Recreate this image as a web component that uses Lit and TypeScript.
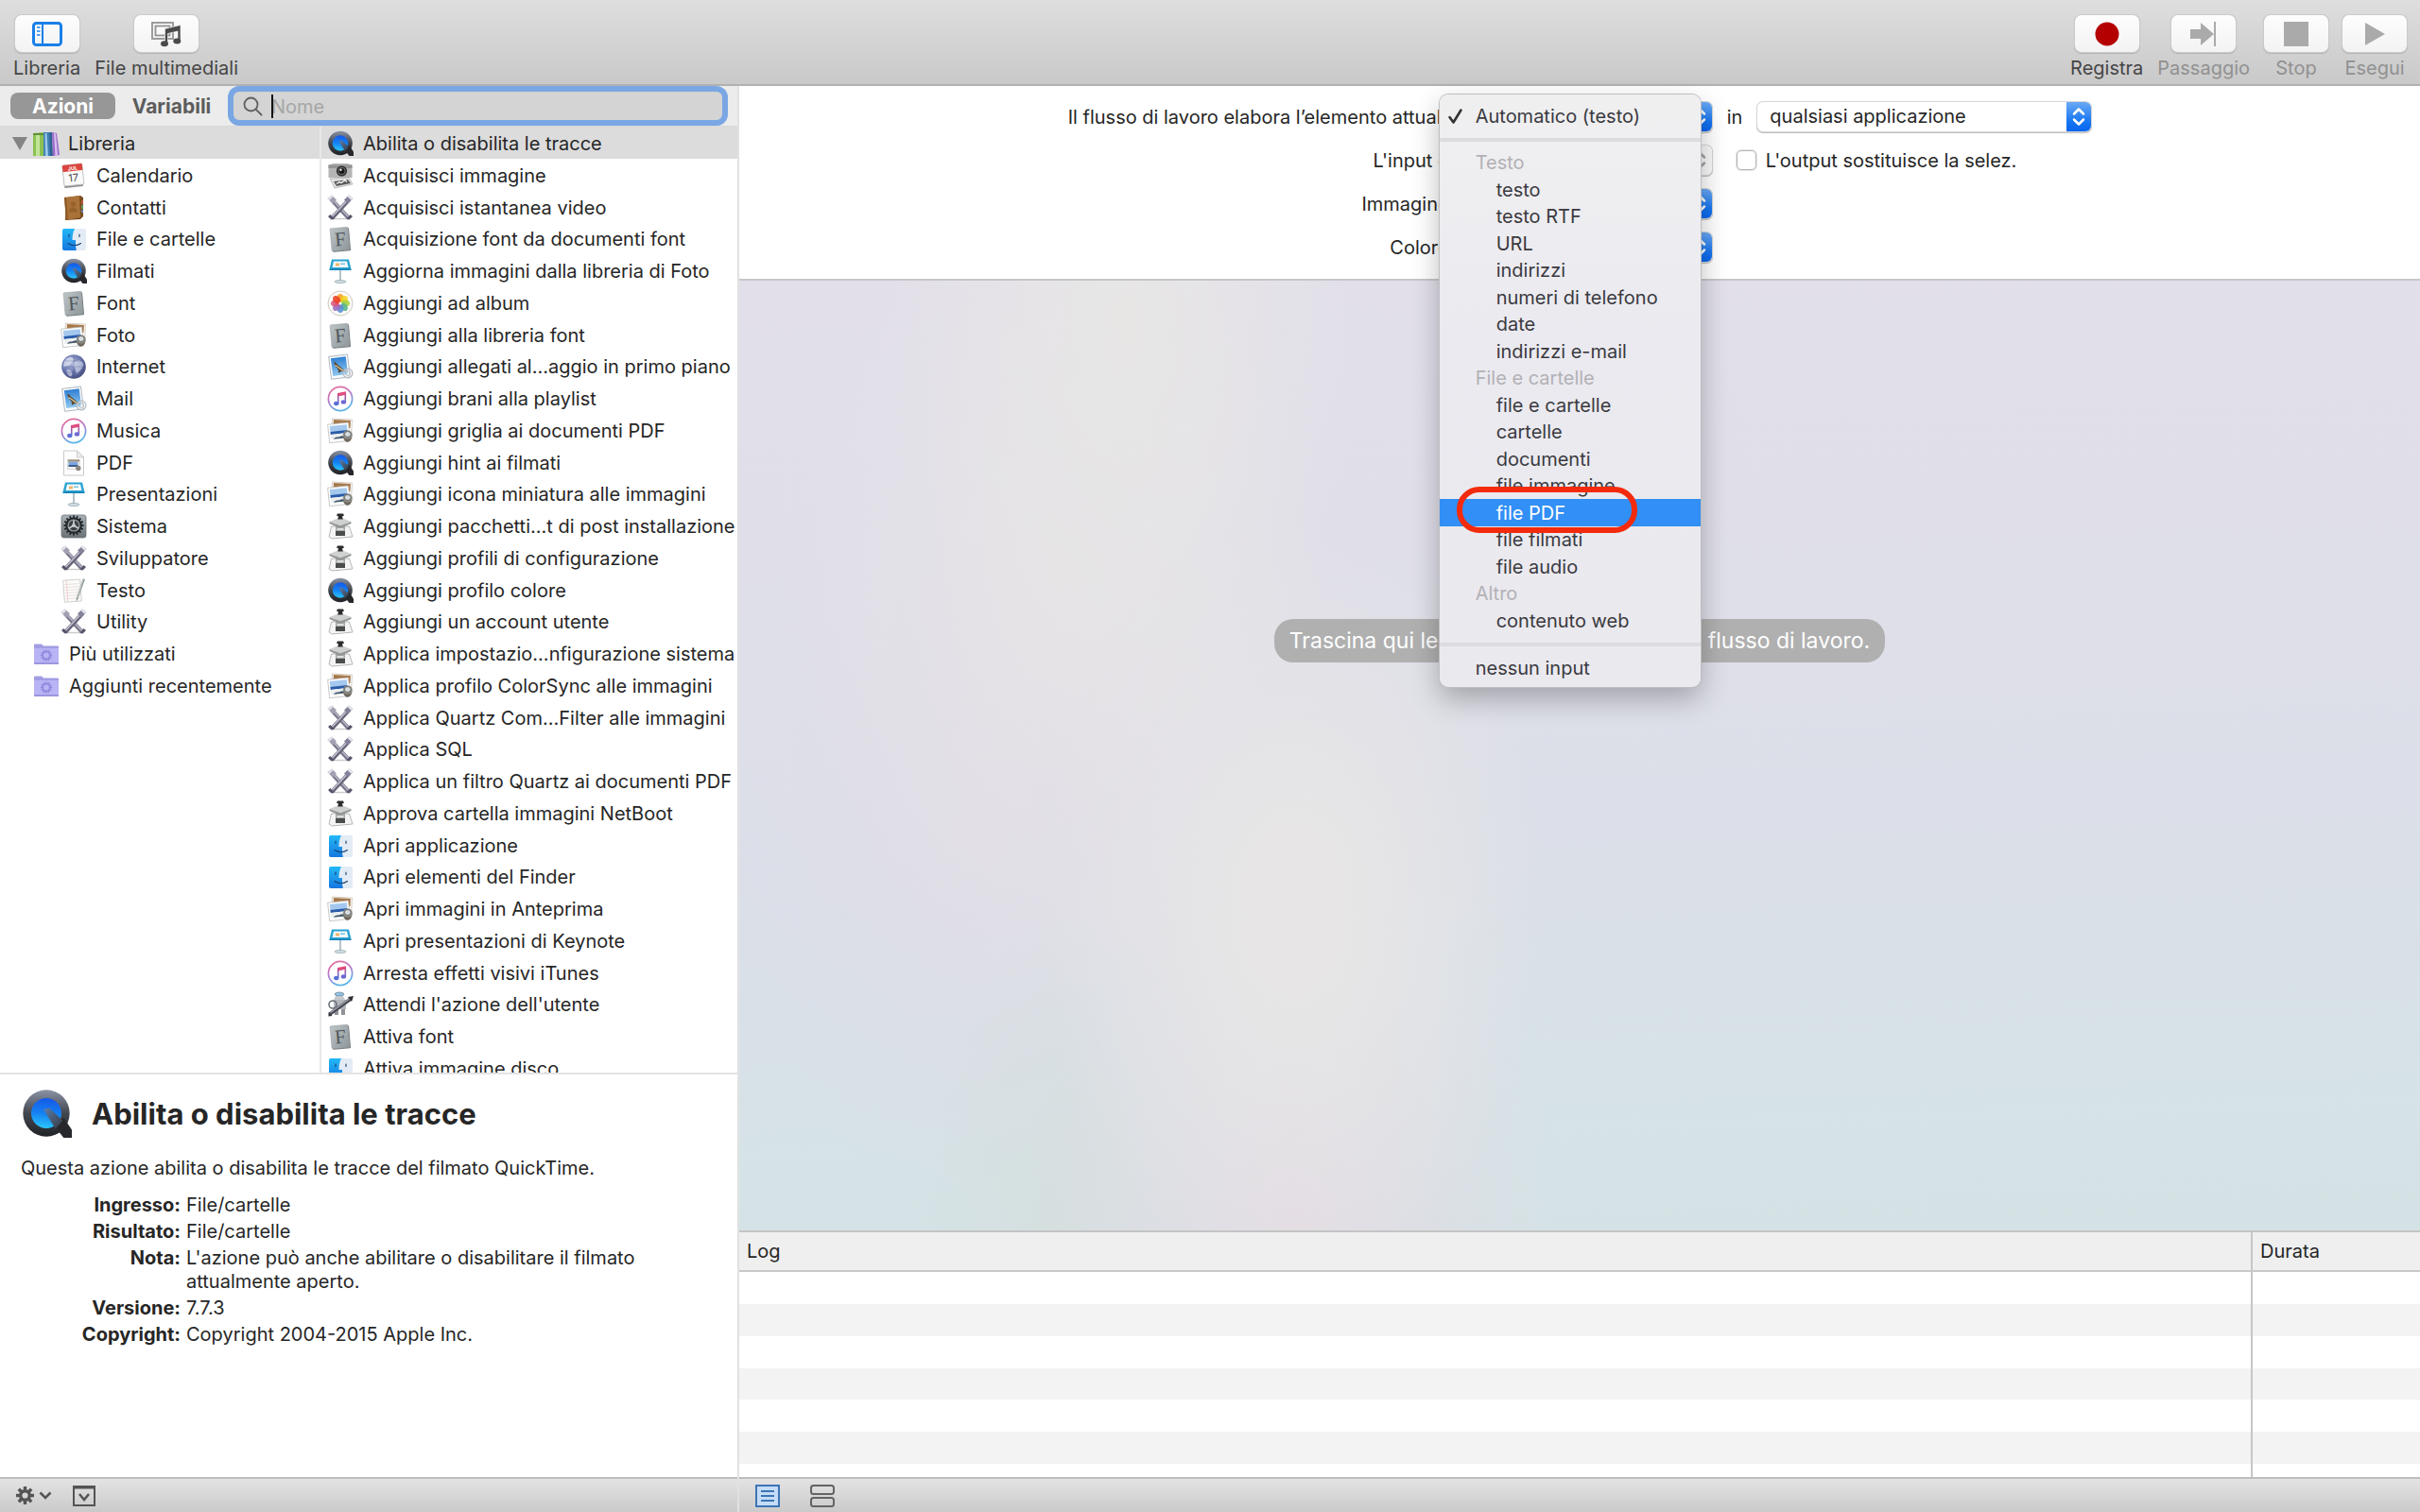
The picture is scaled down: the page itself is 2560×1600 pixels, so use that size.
import { LitElement, html, css, svg, nothing } from "lit";
import { customElement, property, state } from "lit/decorators.js";
import { classMap } from "lit/directives/class-map.js";

type Entry = { icon: string; label: string };
type MenuEntry = { kind: "sub" | "group"; label: string };

const CATEGORIES: Entry[] = [
  { icon: "calendar", label: "Calendario" },
  { icon: "contacts", label: "Contatti" },
  { icon: "finder", label: "File e cartelle" },
  { icon: "quicktime", label: "Filmati" },
  { icon: "font", label: "Font" },
  { icon: "preview", label: "Foto" },
  { icon: "globe", label: "Internet" },
  { icon: "mail", label: "Mail" },
  { icon: "music", label: "Musica" },
  { icon: "pdf", label: "PDF" },
  { icon: "keynote", label: "Presentazioni" },
  { icon: "system", label: "Sistema" },
  { icon: "tools", label: "Sviluppatore" },
  { icon: "text", label: "Testo" },
  { icon: "tools", label: "Utility" },
];

const ACTIONS: Entry[] = [
  { icon: "quicktime", label: "Abilita o disabilita le tracce" },
  { icon: "camera", label: "Acquisisci immagine" },
  { icon: "tools", label: "Acquisisci istantanea video" },
  { icon: "font", label: "Acquisizione font da documenti font" },
  { icon: "keynote", label: "Aggiorna immagini dalla libreria di Foto" },
  { icon: "photos", label: "Aggiungi ad album" },
  { icon: "font", label: "Aggiungi alla libreria font" },
  { icon: "mail", label: "Aggiungi allegati al…aggio in primo piano" },
  { icon: "music", label: "Aggiungi brani alla playlist" },
  { icon: "preview", label: "Aggiungi griglia ai documenti PDF" },
  { icon: "quicktime", label: "Aggiungi hint ai filmati" },
  { icon: "preview", label: "Aggiungi icona miniatura alle immagini" },
  { icon: "installer", label: "Aggiungi pacchetti…t di post installazione" },
  { icon: "installer", label: "Aggiungi profili di configurazione" },
  { icon: "quicktime", label: "Aggiungi profilo colore" },
  { icon: "installer", label: "Aggiungi un account utente" },
  { icon: "installer", label: "Applica impostazio…nfigurazione sistema" },
  { icon: "preview", label: "Applica profilo ColorSync alle immagini" },
  { icon: "tools", label: "Applica Quartz Com…Filter alle immagini" },
  { icon: "tools", label: "Applica SQL" },
  { icon: "tools", label: "Applica un filtro Quartz ai documenti PDF" },
  { icon: "installer", label: "Approva cartella immagini NetBoot" },
  { icon: "finder", label: "Apri applicazione" },
  { icon: "finder", label: "Apri elementi del Finder" },
  { icon: "preview", label: "Apri immagini in Anteprima" },
  { icon: "keynote", label: "Apri presentazioni di Keynote" },
  { icon: "music", label: "Arresta effetti visivi iTunes" },
  { icon: "automator", label: "Attendi l'azione dell'utente" },
  { icon: "font", label: "Attiva font" },
  { icon: "finder", label: "Attiva immagine disco" },
];

const MENU: MenuEntry[] = [
  { kind: "group", label: "Testo" },
  { kind: "sub", label: "testo" },
  { kind: "sub", label: "testo RTF" },
  { kind: "sub", label: "URL" },
  { kind: "sub", label: "indirizzi" },
  { kind: "sub", label: "numeri di telefono" },
  { kind: "sub", label: "date" },
  { kind: "sub", label: "indirizzi e-mail" },
  { kind: "group", label: "File e cartelle" },
  { kind: "sub", label: "file e cartelle" },
  { kind: "sub", label: "cartelle" },
  { kind: "sub", label: "documenti" },
  { kind: "sub", label: "file immagine" },
  { kind: "sub", label: "file PDF" },
  { kind: "sub", label: "file filmati" },
  { kind: "sub", label: "file audio" },
  { kind: "group", label: "Altro" },
  { kind: "sub", label: "contenuto web" },
];

const DETAILS: [string, string][] = [
  ["Ingresso:", "File/cartelle"],
  ["Risultato:", "File/cartelle"],
  ["Nota:", "L'azione può anche abilitare o disabilitare il filmato attualmente aperto."],
  ["Versione:", "7.7.3"],
  ["Copyright:", "Copyright 2004-2015 Apple Inc."],
];

const gearTeeth = (n: number, cx: number, cy: number, r: number, w: number, h: number) =>
  Array.from({ length: n }, (_, i) => svg`
    <rect x=${cx - w / 2} y=${cy - r} width=${w} height=${h}
      transform="rotate(${(360 / n) * i} ${cx} ${cy})" />`);

const PETALS = ["#f7a11b", "#f4d321", "#a8cf3a", "#54b78a", "#5c8fd6", "#9a6cc0", "#d9587e", "#ec3f24"];

const ART: Record<string, unknown> = {
  library: svg`
    <path d="M0 3l11-1v25H0z" fill="#8cc152"/><path d="M3 4l4-.5V27H3z" fill="#c3e59a"/>
    <path d="M0 3h11v2H0z" fill="#5f8f38"/>
    <path d="M11 2h6l2 25h-8z" fill="#3f7fb5"/><path d="M12.500 3h2l1.500 24h-3z" fill="#9cc9e8"/>
    <path d="M17 2h3l1 25h-3z" fill="#2f6292"/>
    <path d="M20 2l5 1 3 23-7 1z" fill="#9b6cc9"/><path d="M22 3l2 .5 2 23-2.500.5z" fill="#d9bff0"/>`,
  calendar: svg`
    <g transform="rotate(-6 14 14)">
      <rect x="3" y="3" width="20" height="23" rx="1" fill="#8f8f8f"/>
      <rect x="3" y="2" width="21" height="22" rx="1" fill="#fafafa" stroke="#b8b8b8" stroke-width=".8"/>
      <rect x="3" y="2" width="21" height="7" rx="1" fill="#d9453d"/>
      <text x="13.500" y="8" font-size="5.500" font-weight="700" fill="#fff" text-anchor="middle" font-family="Inter, sans-serif">JUL</text>
      <text x="13.500" y="20" font-size="11" fill="#444" text-anchor="middle" font-family="Inter, sans-serif">17</text>
    </g>`,
  contacts: svg`
    <path d="M6 3l15-2 3 2v20l-3 3L5 27z" fill="#7b4c20"/>
    <path d="M4 3l16-2 1 23-15 3z" fill="#aa7238"/><path d="M4 3l2-.2L8 26.500l-2 .5z" fill="#8b5826"/>
    <circle cx="13.500" cy="10" r="2.600" fill="#96622c"/>
    <path d="M9 18.500c0-7 8.500-7 9 0z" fill="#96622c"/>
    <path d="M23 6v4" stroke="#c9604a" stroke-width="1.600"/><path d="M23 11v4" stroke="#5fae78" stroke-width="1.600"/><path d="M23 16v3" stroke="#5a94c8" stroke-width="1.600"/>`,
  finder: svg`
    <rect x="2" y="3" width="25" height="23" rx="2" fill="#e3ebf5"/>
    <path d="M4 3h11c-2 4-2.500 8-2.500 12H16c0 4 0 7 .8 11H4a2 2 0 0 1-2-2V5a2 2 0 0 1 2-2z" fill="url(#g-finder)"/>
    <path d="M9 9v2.500M20 9v2.500" stroke="#16406e" stroke-width="1.100" stroke-linecap="round"/>
    <path d="M8 18.500c4 3 9.500 3 13.500 0" stroke="#16406e" stroke-width="1.100" fill="none" stroke-linecap="round"/>`,
  quicktime: svg`
    <circle cx="14" cy="13.500" r="12.800" fill="url(#g-qt-ring)"/>
    <path d="M18 20l5.500-4L28 22.500V27h-4.500z" fill="#26282c"/>
    <circle cx="14" cy="13.500" r="8.300" fill="url(#g-qt)"/>
    <path d="M12.500 11.500l3-1 7.500 7-4 4.500z" fill="url(#g-qt-tail)"/>`,
  font: svg`
    <g transform="rotate(-5 14 14)">
      <rect x="5" y="3" width="19" height="24" rx="1" fill="#6f7679"/>
      <rect x="4" y="2" width="19" height="24" rx="1" fill="url(#g-font)" stroke="#9aa1a4" stroke-width=".5"/>
      <text x="14" y="21" font-size="21" fill="#50575b" text-anchor="middle" font-family="Liberation Serif, serif">F</text>
    </g>`,
  preview: svg`
    <g transform="rotate(3 14 10)"><rect x="5" y="1.500" width="21" height="15" fill="#fff" stroke="#b9aa97" stroke-width=".6"/><rect x="6.500" y="2.500" width="18" height="8" fill="#a67848"/></g>
    <g transform="rotate(-6 13 15)">
      <rect x="1.500" y="6" width="22" height="19.500" fill="#fdfdfd" stroke="#b5b5b5" stroke-width=".7"/>
      <rect x="3.500" y="8" width="18" height="7" fill="#a5c8ee"/><rect x="3.500" y="14" width="18" height="3" fill="#2a5ca8"/>
      <path d="M3.500 17h18v5h-18z" fill="#eceff0"/><path d="M6 22c3-3 5-1 7-2s4-1 5 2z" fill="#44596b"/>
    </g>
    <path d="M17 19c0 9 9 9 9.500 0z" fill="#6f685e"/><ellipse cx="21.800" cy="18" rx="5" ry="4.600" fill="#8f8f8a"/>
    <ellipse cx="21.800" cy="17.500" rx="3.400" ry="3" fill="#d7dde0" stroke="#5d5d59" stroke-width=".9"/>`,
  globe: svg`
    <circle cx="14" cy="14" r="12.800" fill="url(#g-globe)"/>
    <path d="M6 6c4-3 7-2 8 0s-3 4-4 6-5 1-7 3c0-4 1-7 3-9z" fill="#dfe4f3" opacity=".75"/>
    <path d="M16 8c4-2 7 0 8 3s-2 5-4 8-4 3-4-1-3-3-3-6 1-3 3-4z" fill="#dfe4f3" opacity=".6"/>
    <path d="M8 17c3 0 5 3 4 6s-4 0-5-2-1-4 1-4z" fill="#dfe4f3" opacity=".6"/>
    <path d="M14 2v24M2 14h24M5 8h18M5 20h18" stroke="#3d4880" stroke-width=".6" opacity=".5"/>`,
  mail: svg`
    <g transform="rotate(-7 14 14)">
      <rect x="3" y="2" width="20" height="24" fill="#fbfbfb" stroke="#a9b4bd" stroke-width=".9"/>
      <rect x="5" y="4" width="16" height="19" fill="url(#g-mail)"/>
      <path d="M8 8c2 0 3 4 6 6l5 6-5-1c-1 1.500-2.500 1.500-3 .5 1-2 0-3.500-1.500-5.500s-1.500-4-1.500-6z" fill="#5a4a35"/>
      <path d="M8.500 12c3 1 4.500 4 8 6.500" stroke="#d9c79b" stroke-width="1.300" fill="none"/>
    </g>
    <circle cx="22" cy="21" r="4.800" fill="#fff" fill-opacity=".35" stroke="#b9bfc6" stroke-width="1.500"/>
    <circle cx="22" cy="21" r="2.500" fill="none" stroke="#9aa3ab" stroke-width=".7"/>`,
  music: svg`
    <circle cx="14" cy="14" r="12.600" fill="#fff" stroke="url(#g-music)" stroke-width="1.700"/>
    <path d="M11 8l9-1.800v3.500l-9 1.800z" fill="#e04c7f"/>
    <path d="M11.700 9v9.500M19.300 7.500V17" stroke="url(#g-note)" stroke-width="1.600"/>
    <ellipse cx="9.800" cy="19" rx="2.700" ry="2.200" fill="#5a6fd6"/><ellipse cx="17.400" cy="17.400" rx="2.700" ry="2.200" fill="#6f69d3"/>`,
  pdf: svg`
    <path d="M3.500 1h14l7 7v19h-21z" fill="#fdfdfd" stroke="#c9c9c9"/>
    <path d="M17.500 1v7h7z" fill="#eee" stroke="#c4c4c4" stroke-width=".8"/>
    <rect x="7.500" y="10.500" width="13" height="10" fill="#f2f2f2" stroke="#bbb" stroke-width=".5"/><rect x="8" y="10.500" width="12" height="2" fill="#a08a72"/>
    <rect x="8.500" y="12.500" width="10" height="4" fill="#7fa6dc"/><rect x="8.500" y="16" width="10" height="2" fill="#3c5c92"/>
    <circle cx="18.800" cy="19.500" r="2.700" fill="#8a8681"/>`,
  keynote: svg`
    <path d="M5 1.500h18l2.500 10.500h-23z" fill="#2aa3d3"/><path d="M7 3.500h14l1.500 6.500h-17z" fill="#f5fafc"/>
    <path d="M2.500 11.500h23V13h-23z" fill="#1581b4"/><path d="M9 5.500h4v3H9z" fill="#f0b36a"/><path d="M14 5.500h5V7h-5z" fill="#7fc2dd"/>
    <rect x="13.200" y="13" width="1.600" height="11.500" fill="#a3b5bd"/>
    <ellipse cx="14" cy="25" rx="6" ry="1.600" fill="#cfdce2" stroke="#91a5ae" stroke-width=".7"/>`,
  system: svg`
    <rect x="1" y="2" width="26" height="24" rx="2.500" fill="url(#g-sys)" stroke="#6d7377" stroke-width=".8"/>
    <g fill="#23282b">${gearTeeth(16, 14, 13, 10.6, 1.8, 3)}</g>
    <circle cx="14" cy="13" r="8.800" fill="#23282b"/><circle cx="14" cy="13" r="6.600" fill="#9da3a6"/>
    <circle cx="14" cy="13" r="5.400" fill="#3a4043"/>
    <path d="M14 13V7.500M14 13l5 3M14 13l-5 3" stroke="#c5cacc" stroke-width="1.800"/><circle cx="14" cy="13" r="2" fill="#c5cacc"/>`,
  tools: svg`
    <path d="M5 25.500h19" stroke="#ccc" stroke-width="1.500"/>
    <path d="M4.500 5l18.500 20" stroke="#77768a" stroke-width="4.200"/><path d="M5 4.500l18 19.500" stroke="#b9b8c8" stroke-width="1.500"/>
    <path d="M23.500 5L5 25" stroke="#676678" stroke-width="4.200"/><path d="M22.500 5L5 23.500" stroke="#c5c4d4" stroke-width="1.500"/>
    <path d="M0.500 4L5 .5l5 5L6 9.500z" fill="#a2a1b2"/><path d="M.5 4L5 .5l1.500 1.500L2.500 5.800z" fill="#e1e1ea"/>
    <path d="M27.500 4L23 .5l-5 5 4 4z" fill="#83829a"/><path d="M27.500 4L23 .5 21.500 2l4 3.800z" fill="#e6e6ee"/>
    <path d="M1 23l3.500 3.500 3-1-4-4.500zM27 23l-3.500 3.500-3-1 4-4.500z" fill="#55546a"/>`,
  text: svg`
    <g transform="rotate(-4 14 14)">
      <rect x="3.500" y="2.500" width="18" height="23" fill="#fbfbf9" stroke="#c6c6c4" stroke-width=".8"/>
      <path d="M5 7h15M5 10h15M5 13h15M5 16h15M5 19h15M5 22h15" stroke="#e3dcdc" stroke-width=".8"/><path d="M7 3v22" stroke="#efb9b9" stroke-width=".6"/>
    </g>
    <path d="M23.500 1.500l2.500.5-7.500 21-2 2.500.3-3.500z" fill="#8d9a96"/><path d="M24 2l-6 20" stroke="#d3dbd8" stroke-width=".8"/>`,
  folder: svg`
    <path d="M1 4.500a1 1 0 0 1 1-1h7l2 2h15a1 1 0 0 1 1 1V24a1 1 0 0 1-1 1H2a1 1 0 0 1-1-1z" fill="#a19ee4"/>
    <path d="M1 8h26v16a1 1 0 0 1-1 1H2a1 1 0 0 1-1-1z" fill="#b8b4f5"/>
    <path d="M1 23h26v1a1 1 0 0 1-1 1H2a1 1 0 0 1-1-1z" fill="#9b97df"/>
    <g fill="#8d89dc">${gearTeeth(12, 14, 15.5, 6.2, 1.6, 2.4)}</g>
    <circle cx="14" cy="15.500" r="3.700" fill="none" stroke="#8d89dc" stroke-width="1.500"/>`,
  camera: svg`
    <path d="M1.500 2.500L7 1h14l5.500 1.500V16h-25z" fill="#b4b4b4"/><path d="M1.500 2.500h25V6h-25z" fill="#949494"/>
    <circle cx="15.500" cy="9" r="5.600" fill="#2c2c2c"/><circle cx="15.500" cy="9" r="4" fill="#6b6b6b"/><circle cx="15.500" cy="9" r="3" fill="#151515"/>
    <circle cx="14.500" cy="7.800" r="1.200" fill="#eee"/>
    <path d="M3 17l20-1 4 7-19 4z" fill="#e3e3e3" stroke="#999" stroke-width=".6"/><path d="M7 20l15-2 3 4-15 3z" fill="#5b5b5b"/>
    <path d="M10 22.500l3-2 2 1 4-3 2 2" stroke="#f4f4f4" stroke-width="1.400" fill="none"/>`,
  photos: svg`
    <circle cx="14" cy="14" r="13" fill="#fbfaf7" stroke="#c9c5bb" stroke-width=".9"/>
    ${PETALS.map((c, i) => svg`<ellipse cx="14" cy="8.700" rx="3.600" ry="4.800" fill=${c} opacity=".88" transform="rotate(${i * 45} 14 14)"/>`)}
    <circle cx="14" cy="14" r="1.600" fill="#fff"/>`,
  installer: svg`
    <path d="M4.500 14h19l3.500 11-22 2-3-2z" fill="#f4f4f4" stroke="#a7a7a7" stroke-width=".8"/>
    <path d="M9 11h10v13H9z" fill="#a5a7a5"/><path d="M9 19h10v5H9z" fill="#4a4d4c"/>
    <path d="M10.500 17h7" stroke="#eee" stroke-width="1.600"/>
    <path d="M2.500 9L14 4.500 25.500 9 14 13.500z" fill="#cfd1d0"/><path d="M2.500 9L14 13.500V16L2.500 11zM25.500 9L14 13.500V16l11.500-5z" fill="#939694"/>
    <path d="M11 .5h6l1 2-2 1 .8 3h-5.600l.8-3-2-1z" fill="#2c2c2c"/>`,
  automator: svg`
    <ellipse cx="13" cy="3" rx="5" ry="2" fill="#8fc0e6" stroke="#6b7b88" stroke-width=".7"/>
    <path d="M9 5h8l2 4H7z" fill="#c4c9ce"/><path d="M7 9h13v10H7z" fill="#b3b8bd"/><path d="M8 19h4v6H8zM15 19h4v6h-4z" fill="#8e9398"/>
    <circle cx="6" cy="14" r="4" fill="none" stroke="#6a7076" stroke-width="1.600"/>
    <path d="M3 24L25 8" stroke="#4a4c55" stroke-width="3.800"/><path d="M3.500 22.500L25.500 6.500" stroke="#9ea1ad" stroke-width="1.200"/>
    <path d="M22 6l6-1-2 6zM1.500 22l4 4-4 .5z" fill="#2e3036"/>`,
};

const DEFS = svg`
  <linearGradient id="g-finder" x1="0" y1="0" x2="0" y2="1"><stop offset="0" stop-color="#22b9f6"/><stop offset="1" stop-color="#1677e0"/></linearGradient>
  <linearGradient id="g-qt-ring" x1="0" y1="0" x2="0" y2="1"><stop offset="0" stop-color="#8b93a5"/><stop offset=".5" stop-color="#43474f"/><stop offset="1" stop-color="#202226"/></linearGradient>
  <linearGradient id="g-qt" x1=".5" y1="0" x2=".4" y2="1"><stop offset="0" stop-color="#1559e8"/><stop offset=".5" stop-color="#1480f2"/><stop offset="1" stop-color="#2cc6fb"/></linearGradient>
  <linearGradient id="g-qt-tail" x1="0" y1="0" x2="1" y2="1"><stop offset="0" stop-color="#5c7fae"/><stop offset="1" stop-color="#34383f"/></linearGradient>
  <linearGradient id="g-font" x1="0" y1="0" x2="1" y2="1"><stop offset="0" stop-color="#bcc4c7"/><stop offset="1" stop-color="#8f979a"/></linearGradient>
  <radialGradient id="g-globe" cx=".4" cy=".35" r=".7"><stop offset="0" stop-color="#b3bcdf"/><stop offset=".6" stop-color="#6674ab"/><stop offset="1" stop-color="#434a78"/></radialGradient>
  <linearGradient id="g-mail" x1="0" y1="0" x2="0" y2="1"><stop offset="0" stop-color="#2f7fd3"/><stop offset="1" stop-color="#8fc8f1"/></linearGradient>
  <linearGradient id="g-music" x1="0" y1="0" x2=".4" y2="1"><stop offset="0" stop-color="#ee6a8e"/><stop offset=".5" stop-color="#b877c9"/><stop offset="1" stop-color="#5bb3e8"/></linearGradient>
  <linearGradient id="g-note" gradientUnits="userSpaceOnUse" x1="0" y1="7" x2="0" y2="19"><stop offset="0" stop-color="#e04c7f"/><stop offset="1" stop-color="#5a6fd6"/></linearGradient>
  <linearGradient id="g-sys" x1="0" y1="0" x2="0" y2="1"><stop offset="0" stop-color="#a9b2b8"/><stop offset="1" stop-color="#6b7175"/></linearGradient>`;

@customElement("app-icon")
export class AppIcon extends LitElement {
  static styles = css`
    :host { display: block; flex: none; width: 28px; height: 28px; }
    .art { display: block; width: 100%; height: 100%; overflow: visible; }
  `;
  @property() name = "";
  render() {
    return html`<svg class="art" viewBox="0 0 28 28" aria-hidden="true"><defs>${DEFS}</defs>${ART[this.name] ?? nothing}</svg>`;
  }
}

@customElement("popup-select")
export class PopupSelect extends LitElement {
  static styles = css`
    :host { display: block; }
    .box { display: grid; grid-template-columns: 1fr 26px; height: 31px; border-radius: 6px; background: #fff;
      box-shadow: 0 0 0 1px #d6d6d6, 0 1px 1px 1px #bdbdbd; overflow: hidden; }
    .field { grid-area: 1 / 1 / 2 / 3; appearance: none; border: 0; background: transparent; padding: 0 32px 0 13px;
      font: 400 20px/31px Inter, "Liberation Sans", sans-serif; color: #262626; min-width: 0; opacity: 1; }
    .arrows { grid-area: 1 / 2 / 2 / 3; background: linear-gradient(#6aa9f5, #1474f1 70%, #0a66ef); pointer-events: none; }
    .glyph { display: block; width: 26px; height: 31px; }
    .box.off .arrows { background: #fafafa; }
  `;
  @property() label = "";
  @property() value = "";
  @property({ type: Boolean }) off = false;
  render() {
    return html`<div class=${classMap({ box: true, off: this.off })}>
      <select class="field" aria-label=${this.label} ?disabled=${this.off}><option>${this.value}</option></select>
      <span class="arrows"><svg class="glyph" viewBox="0 0 26 31" fill="none" stroke=${this.off ? "#a2a2a2" : "#fff"} stroke-width="2.500" stroke-linecap="round" stroke-linejoin="round">
        <path d="M8 12.500l5-5 5 5M8 18.500l5 5 5-5"/></svg></span>
    </div>`;
  }
}

@customElement("app-root")
export class AppRoot extends LitElement {
  static styles = css`
    :host { display: block; }
    * { box-sizing: border-box; }
    ul, dl, dd, h1, p { margin: 0; padding: 0; list-style: none; }
    button { font: inherit; color: inherit; border: 0; padding: 0; background: none; }
    svg { display: block; }
    .app { height: 100vh; min-height: 900px; display: flex; flex-direction: column; overflow: hidden; background: #fff; color: #262626;
      font: 400 20px/24px Inter, "Liberation Sans", sans-serif; }

    .toolbar { flex: none; height: 91px; display: flex; justify-content: space-between; padding: 16px 14px 0;
      background: linear-gradient(#dedede, #c9c9c9); border-bottom: 2px solid #b1b1b1; }
    .group { display: flex; gap: 15px; }
    .tool { display: flex; flex-direction: column; align-items: center; gap: 5px; min-width: 68px; color: #454545; }
    .tool:disabled { color: #919191; }
    .face { width: 68px; height: 39px; border-radius: 7px; display: grid; place-items: center;
      background: linear-gradient(#fdfdfd, #f3f3f3); box-shadow: 0 0 0 1px #cbcbcb, 0 1px 1px 1px #b3b3b3; }

    .main { flex: 1; min-height: 0; display: grid; grid-template-columns: minmax(600px, 782px) minmax(0, 1fr); }
    .side { display: grid; grid-template-rows: 43px minmax(0, 1001fr) minmax(0, 428fr) 37px; min-height: 0; border-right: 2px solid #e1e1e1; }
    .tabs { display: flex; align-items: center; padding: 0 10px 0 11px; background: #ececec; border-bottom: 1px solid #d8d8d8; }
    .tab { height: 28px; padding-top: 1px; font-size: 21px; font-weight: 700; color: #5c5c5c; }
    .tab.on { width: 111px; border-radius: 8px; background: #979797; color: #fff; }
    .tab.off { width: 119px; }
    .search { flex: 1; position: relative; display: flex; align-items: center; gap: 9px; height: 42px; padding: 0 10px;
      border: 6px solid #7aa7e3; border-radius: 12px; background: #d4d4d4; }
    .query { flex: 1; min-width: 0; border: 0; outline: 0; padding: 2px 0 0; background: transparent; font: inherit; color: #262626; }
    .query::placeholder { color: #a6a6a6; opacity: 1; }
    .caret { position: absolute; left: 40px; top: 3px; width: 2px; height: 25px; background: #111; }

    .browser { min-height: 0; display: grid; grid-template-columns: 338px minmax(0, 1fr); overflow: hidden; }
    .column { min-height: 0; overflow: hidden; }
    .column + .column { border-left: 2px solid #e8e8e8; }
    .row { display: flex; align-items: center; gap: 10px; width: 100%; height: 34px; padding-top: 1px; text-align: left; white-space: nowrap; }
    li:nth-child(4n) > .row { height: 33px; }
    .row.on { background: #dcdcdc; }
    .row.root { padding-left: 35px; }
    .row.child { padding-left: 64px; }
    .row.action { padding-left: 6px; }
    .row.open { padding-left: 13px; gap: 9px; }
    .twist { margin-right: -3px; }

    .info { min-height: 0; overflow: hidden; border-top: 2px solid #e4e4e4; padding: 15px 8px 0 22px; }
    .heading { display: flex; align-items: center; gap: 21px; }
    .heading app-icon { width: 54px; height: 54px; }
    .title { font-size: 31px; line-height: 54px; font-weight: 700; }
    .about { margin-top: 18px; }
    .facts { margin-top: 15px; display: grid; grid-template-columns: 169px minmax(0, 1fr); gap: 3px 6px; line-height: 25px; }
    .facts dt { text-align: right; font-weight: 700; }

    .status { height: 37px; display: flex; align-items: center; background: linear-gradient(#e3e3e3, #cacaca); border-top: 2px solid #bdbdbd; }
    .status.left { gap: 22px; padding-left: 17px; }
    .status.right { gap: 32px; padding-left: 17px; }
    .gearbtn { display: flex; align-items: center; gap: 5px; }

    .work { display: grid; grid-template-rows: auto minmax(0, 1005fr) minmax(0, 261fr) 37px; min-width: 0; min-height: 0; }
    .config { display: grid; grid-template-columns: 403px 270px auto; justify-content: center; align-items: center; gap: 15px 8px;
      padding: 17px 0 18px; border-bottom: 2px solid #c6c6ca; }
    .key { text-align: right; white-space: nowrap; }
    .picker { position: relative; height: 31px; }
    .scope { display: flex; align-items: center; gap: 16px; padding-left: 8px; }
    .scope popup-select { width: 353px; }
    .check { display: flex; align-items: center; gap: 10px; padding-left: 18px; }
    .tick { appearance: none; margin: 0; width: 21px; height: 21px; border-radius: 5px; border: 1px solid #b5b5b5; background: #fff; box-shadow: 0 0 0 1px #e6e6e6; }

    .menu { position: absolute; z-index: 2; left: -18px; top: -8px; width: 276px; padding: 8px 0 6px; border-radius: 9px;
      background: linear-gradient(#f0eff0, #ebeaf0 40%, #eae9ee); color: #3a3a3f; box-shadow: 0 0 0 1px #bdbdc2, 0 12px 30px rgba(0, 0, 0, .28); }
    .option { display: flex; align-items: center; width: 100%; height: 28px; padding-left: 60px; text-align: left; white-space: nowrap; }
    .groups li:nth-child(even) > .option { height: 29px; }
    .option.top { padding-left: 38px; height: 29px; }
    .option.current { padding-left: 8px; gap: 13px; }
    .option.group { padding-left: 38px; color: #b2b1b6; }
    .option.hot { background: #318ff5; color: #fff; }
    .rule { height: 4px; margin: 9px 0 8px; background: #dcdce0; }
    .ring { position: absolute; z-index: 3; left: 0; top: 407px; width: 191px; height: 49px; border: 6px solid #f32b0c; border-radius: 24px; pointer-events: none; }

    .canvas { min-height: 0; display: grid; justify-items: center; grid-template-rows: 358fr auto 601fr;
      background:
        radial-gradient(ellipse 14% 50% at 23% 4%, rgba(232, 231, 229, .9) 0%, rgba(231, 229, 230, 0) 100%),
        radial-gradient(ellipse 16% 45% at 19% 32%, rgba(231, 228, 230, .8) 0%, rgba(231, 228, 230, 0) 100%),
        radial-gradient(ellipse 15% 40% at 33% 66%, rgba(232, 230, 230, .95) 20%, rgba(230, 228, 230, 0) 100%),
        radial-gradient(ellipse 16% 34% at 33% 98%, rgba(229, 219, 227, .9) 0%, rgba(227, 222, 230, 0) 100%),
        radial-gradient(ellipse 9% 30% at 19% 98%, rgba(213, 222, 221, .8) 0%, rgba(213, 222, 221, 0) 100%),
        radial-gradient(ellipse 16% 40% at 15% 58%, rgba(226, 220, 230, .7) 0%, rgba(226, 220, 230, 0) 100%),
        linear-gradient(178deg, #e2dfea 0%, #dfdfe9 35%, #dbdfe8 60%, #d5e3e7 90%, #d4e2e5 100%); }
    .hint { grid-row: 2; padding: 0 16px; border-radius: 20px; background: #b0b0b0; color: #fff; font-size: 23px; line-height: 46px; white-space: nowrap; }

    .log { min-height: 0; overflow: hidden; }
    .grid { width: 100%; border-collapse: separate; border-spacing: 0; table-layout: fixed; }
    .grid th { height: 44px; padding: 0 8px; background: #efefef; border-top: 2px solid #c4c4c4; border-bottom: 2px solid #c9c9c9; text-align: left; font-weight: 400; }
    .grid td { height: 34px; padding: 0; background: #fff; }
    .grid tr:nth-child(even) td { background: #f3f3f3; }
    .grid tr:nth-child(4n) td { height: 33px; }
    .grid .last { width: 179px; border-left: 2px solid #c6c6c6; }
  `;

  @state() private action = 0;
  @state() private hot = "file PDF";

  private tool(label: string, art: unknown, off = false) {
    return html`<button class="tool" ?disabled=${off}><span class="face">${art}</span><span>${label}</span></button>`;
  }

  private toolbar() {
    return html`<header class="toolbar">
      <div class="group">
        ${this.tool("Libreria", html`<svg width="32" height="26" viewBox="0 0 32 26" fill="none" stroke="#1a7fe8">
          <rect x="1.500" y="1.500" width="29" height="23" rx="3" stroke-width="3"/><path d="M11 2v22" stroke-width="2"/><path d="M5 6h3.500M5 10h3.500M5 14h3.500" stroke-width="1.500"/></svg>`)}
        ${this.tool("File multimediali", html`<svg width="32" height="28" viewBox="0 0 32 28">
          <g fill="none" stroke="#929292" stroke-width="1.800"><rect x="1" y="2" width="22" height="17"/><rect x="4.500" y="5.500" width="15" height="10"/></g>
          <path d="M14.500 8.500L31 4.500v17h-3V11l-10.500 2.500v11h-3z" fill="#4a4a4a" stroke="#fafafa" stroke-width=".6"/>
          <ellipse cx="14" cy="24.200" rx="4" ry="3" fill="#4a4a4a"/><ellipse cx="27.300" cy="21.500" rx="4" ry="3" fill="#4a4a4a"/></svg>`)}
      </div>
      <div class="group">
        ${this.tool("Registra", html`<svg width="26" height="26"><circle cx="13" cy="13" r="12.500" fill="#b40000"/></svg>`)}
        ${this.tool("Passaggio", html`<svg width="28" height="26" fill="#aaa"><path d="M0 8h11V1l14 12-14 12v-7H0z"/><rect x="25" y="0" width="2" height="26"/></svg>`, true)}
        ${this.tool("Stop", html`<svg width="26" height="26"><rect width="26" height="26" fill="#aaa"/></svg>`, true)}
        ${this.tool("Esegui", html`<svg width="22" height="26"><path d="M1 1l21 12L1 25z" fill="#aaa"/></svg>`, true)}
      </div>
    </header>`;
  }

  private sidebar() {
    return html`<aside class="side">
      <div class="tabs">
        <button class="tab on">Azioni</button><button class="tab off">Variabili</button>
        <label class="search">
          <svg width="21" height="21" viewBox="0 0 21 21" fill="none" stroke="#5f5f5f" stroke-width="1.800" stroke-linecap="round"><circle cx="8.500" cy="8.500" r="7"/><path d="M13.800 13.800L19.500 19.500"/></svg>
          <input class="query" type="text" placeholder="Nome" aria-label="Nome" /><span class="caret"></span>
        </label>
      </div>
      <div class="browser">
        <ul class="column">
          <li><button class="row open on"><svg class="twist" width="16" height="14"><path d="M0 0h16L8 14z" fill="#848484"/></svg><app-icon name="library"></app-icon>Libreria</button></li>
          ${CATEGORIES.map((c) => html`<li><button class="row child"><app-icon name=${c.icon}></app-icon>${c.label}</button></li>`)}
          <li><button class="row root"><app-icon name="folder"></app-icon>Più utilizzati</button></li>
          <li><button class="row root"><app-icon name="folder"></app-icon>Aggiunti recentemente</button></li>
        </ul>
        <ul class="column">
          ${ACTIONS.map((a, i) => html`<li><button class=${classMap({ row: true, action: true, on: i === this.action })}
            @click=${() => (this.action = i)}><app-icon name=${a.icon}></app-icon>${a.label}</button></li>`)}
        </ul>
      </div>
      <section class="info">
        <div class="heading"><app-icon name="quicktime"></app-icon><h1 class="title">Abilita o disabilita le tracce</h1></div>
        <p class="about">Questa azione abilita o disabilita le tracce del filmato QuickTime.</p>
        <dl class="facts">${DETAILS.map(([k, v]) => html`<dt>${k}</dt><dd>${v}</dd>`)}</dl>
      </section>
      <footer class="status left">
        <button class="gearbtn" aria-label="Azioni">
          <svg width="19" height="19" fill="#545454">${gearTeeth(8, 9.5, 9.5, 9.5, 3.4, 5)}<circle cx="9.500" cy="9.500" r="4.800" fill="none" stroke="#545454" stroke-width="3.400"/></svg>
          <svg width="14" height="9" fill="none" stroke="#545454" stroke-width="2.500"><path d="M1.500 1.500L7 7l5.500-5.500"/></svg>
        </button>
        <button aria-label="Descrizione"><svg width="24" height="22" fill="none" stroke="#545454" stroke-width="2"><rect x="1" y="1" width="22" height="20"/><path d="M1 2h22" stroke-width="3"/><path d="M7 9l5 6 5-6" stroke-width="2.500"/></svg></button>
      </footer>
    </aside>`;
  }

  private menu() {
    return html`<div class="menu" role="menu">
        <button class="option top current" role="menuitem"><svg width="17" height="18" fill="none" stroke="#333" stroke-width="2.600" stroke-linecap="round" stroke-linejoin="round"><path d="M2.500 10l4 5.500L14.500 2.500"/></svg>Automatico (testo)</button>
        <div class="rule"></div>
        <ul class="groups">
          ${MENU.map((m) => html`<li>${m.kind === "group"
            ? html`<span class="option group">${m.label}</span>`
            : html`<button role="menuitem" class=${classMap({ option: true, hot: m.label === this.hot })}
                @mouseenter=${() => (this.hot = m.label)}>${m.label}</button>`}</li>`)}
        </ul>
        <div class="rule"></div>
        <button class="option top" role="menuitem">nessun input</button>
      </div>
      <div class="ring"></div>`;
  }

  private config() {
    return html`<section class="config">
      <span class="key">Il flusso di lavoro elabora l’elemento attuale</span>
      <div class="picker"><popup-select label="Elemento attuale" value="Automatico (testo)"></popup-select>${this.menu()}</div>
      <div class="scope"><span>in</span><popup-select label="in" value="qualsiasi applicazione"></popup-select></div>
      <span class="key">L'input è</span>
      <div class="picker"><popup-select label="L'input è" off></popup-select></div>
      <label class="check"><input class="tick" type="checkbox" />L'output sostituisce la selez.</label>
      <span class="key">Immagine</span>
      <div class="picker"><popup-select label="Immagine"></popup-select></div><span></span>
      <span class="key">Colore</span>
      <div class="picker"><popup-select label="Colore"></popup-select></div><span></span>
    </section>`;
  }

  render() {
    return html`<div class="app">
      ${this.toolbar()}
      <div class="main">
        ${this.sidebar()}
        <main class="work">
          ${this.config()}
          <section class="canvas"><p class="hint">Trascina qui le azioni o i file per creare il flusso di lavoro.</p></section>
          <section class="log">
            <table class="grid">
              <thead><tr><th>Log</th><th class="last">Durata</th></tr></thead>
              <tbody>${[0, 1, 2, 3, 4, 5, 6].map(() => html`<tr><td></td><td class="last"></td></tr>`)}</tbody>
            </table>
          </section>
          <footer class="status right">
            <button aria-label="Log"><svg width="26" height="24"><rect x="1" y="1" width="24" height="22" fill="#c4dcf7" stroke="#3c74b4" stroke-width="2"/><path d="M6 7h14M6 12h14M6 17h14" stroke="#3c74b4" stroke-width="2"/></svg></button>
            <button aria-label="Variabili"><svg width="26" height="24" fill="none" stroke="#636363" stroke-width="2"><rect x="1" y="1" width="24" height="9" rx="2.500"/><rect x="1" y="14" width="24" height="9" rx="2.500"/></svg></button>
          </footer>
        </main>
      </div>
    </div>`;
  }
}
